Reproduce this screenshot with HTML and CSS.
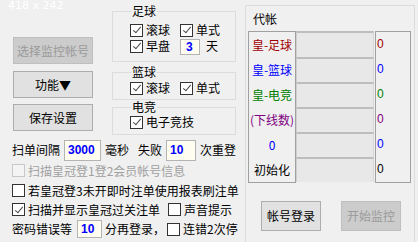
FILE: index.html
```html
<!DOCTYPE html>
<html lang="zh-CN">
<head>
	<meta charset="UTF-8">
	<title>监控设置</title>
	<link rel="stylesheet" href="styles.css">
</head>
<body>

	<!-- size watermark -->
	<div class="mark">418 x 242</div>

	<div class="app">
		<!-- Left Section -->
		<div class="left">
			<div class="top">
				<div class="btns">
					<button class="btn off">选择监控帐号</button>
					<button class="btn">功能▼</button>
					<button class="btn">保存设置</button>
				</div>

				<div class="groups">
					<fieldset class="grp g-foot">
						<legend>足球</legend>
						<div class="row">
							<label class="cb col"><span class="box on"></span>滚球</label>
							<label class="cb"><span class="box on"></span>单式</label>
						</div>
						<div class="row">
							<label class="cb col"><span class="box on"></span>早盘</label>
							<span class="num small">3</span>
							<span class="days">天</span>
						</div>
					</fieldset>

					<fieldset class="grp g-bask">
						<legend>篮球</legend>
						<div class="row">
							<label class="cb col"><span class="box on"></span>滚球</label>
							<label class="cb"><span class="box on"></span>单式</label>
						</div>
					</fieldset>

					<fieldset class="grp g-esp">
						<legend>电竞</legend>
						<div class="row">
							<label class="cb"><span class="box on"></span>电子竞技</label>
						</div>
					</fieldset>
				</div>
			</div>

			<div class="opts">
				<div class="line l1">
					<span>扫单间隔</span>
					<span class="num n-ms">3000</span>
					<span class="sp4">毫秒</span>
					<span class="sp9">失败</span>
					<span class="num n-fail">10</span>
					<span class="sp4">次重登</span>
				</div>
				<div class="line l2">
					<label class="cb dis"><span class="box"></span>扫描皇冠登1登2会员帐号信息</label>
				</div>
				<div class="line l3">
					<label class="cb"><span class="box"></span>若皇冠登3未开即时注单使用报表刷注单</label>
				</div>
				<div class="line l4">
					<label class="cb"><span class="box on"></span>扫描并显示皇冠过关注单</label>
					<label class="cb sp8"><span class="box"></span>声音提示</label>
				</div>
				<div class="line l5">
					<span>密码错误等</span>
					<span class="num n-wait">10</span>
					<span class="sp3">分再登录，</span>
					<label class="cb sp2"><span class="box"></span>连错2次停</label>
				</div>
			</div>
		</div>

		<!-- Right Section -->
		<div class="right">
			<div class="title">代帐</div>
			<div class="table">
				<div class="labels">
					<div class="c-red">皇-足球</div>
					<div class="c-blue">皇-篮球</div>
					<div class="c-green">皇-电竞</div>
					<div class="c-purple">(下线数)</div>
					<div class="c-blue">0</div>
					<div>初始化</div>
				</div>
				<div class="cells">
					<div></div>
					<div></div>
					<div></div>
					<div></div>
					<div></div>
					<div></div>
				</div>
				<div class="vals">
					<div class="c-red">0</div>
					<div class="c-blue">0</div>
					<div class="c-green">0</div>
					<div class="c-purple">0</div>
					<div class="c-blue">0</div>
					<div>0</div>
				</div>
			</div>
			<div class="actions">
				<button class="btn wide">帐号登录</button>
				<button class="btn wide off">开始监控</button>
			</div>
		</div>
	</div>

</body>
</html>
```

FILE: styles.css
```css
/* Global */
body {
	margin: 0;
	overflow: hidden;
	background: #f0f0f0;
	color: #000;
	font-family: "Noto Sans CJK SC", "Noto Sans", sans-serif;
	font-size: 12px;
	line-height: 14px;
}

.mark {
	position: absolute;
	left: 8px;
	top: -1px;
	font-family: "DejaVu Sans", sans-serif;
	font-size: 11px;
	color: #fff;
}

.app {
	display: flex;
	height: 242px;
	overflow: hidden;
}

/* Left Section */
.left {
	width: 245px;
	flex: none;
}

.top {
	display: flex;
	height: 139px;
}

.btns {
	display: flex;
	flex-direction: column;
	padding: 37px 0 0 13px;
	gap: 7px;
}

.btn {
	width: 80px;
	height: 27px;
	padding: 0;
	background: #e1e1e1;
	border: 1px solid #adadad;
	font: inherit;
	color: #000;
}

.btn.off {
	background: #cccccc;
	border-color: #bfbfbf;
	color: #9a9a9a;
}

.btns .btn:last-child {
	margin-top: -1px;
}

/* Group boxes */
.groups {
	margin-left: 19px;
	width: 124px;
}

.grp {
	box-sizing: border-box;
	margin: 0;
	padding: 0 0 0 17px;
	border: 1px solid #dcdcdc;
	min-inline-size: 0;
}

.grp legend {
	padding: 0 1px;
	margin-left: 1px;
	line-height: 14px;
}

.g-foot {
	margin-top: 4px;
	height: 58px;
	padding-top: 4px;
}

.g-bask {
	margin-top: 3px;
	height: 35px;
	padding-top: 1px;
}

.g-esp {
	height: 35px;
}

.row {
	display: flex;
	align-items: center;
	height: 16px;
}

.col {
	width: 50px;
}

/* Checkboxes */
.cb {
	display: flex;
	align-items: center;
	gap: 3px;
	white-space: nowrap;
}

.box {
	box-sizing: border-box;
	width: 13px;
	height: 13px;
	flex: none;
	background: #fff;
	border: 1px solid #333;
	display: flex;
	align-items: center;
	justify-content: center;
}

.box.on::after {
	content: "";
	width: 3px;
	height: 7px;
	margin-top: -2px;
	border: solid #4a4a4a;
	border-width: 0 1.5px 1.5px 0;
	transform: rotate(40deg);
}

.cb.dis {
	color: #a0a0a0;
}

.cb.dis .box {
	border-color: #c8c8c8;
	background: #f4f4f4;
}

/* Number inputs */
.num {
	box-sizing: border-box;
	display: flex;
	align-items: center;
	padding-left: 3px;
	background: #fffcf0;
	border: 1px solid #b4b4b4;
	color: #0000ff;
	font-family: "Liberation Sans", Arial, sans-serif;
	font-weight: 700;
	font-size: 12px;
}

.num.small {
	width: 20px;
	height: 16px;
	margin-top: 2px;
	padding-left: 5px;
}

.days {
	margin-left: 6px;
}

/* Options */
.opts {
	padding-left: 12px;
}

.line {
	display: flex;
	align-items: center;
	white-space: nowrap;
}

.l1 { height: 22px; }
.l2 { height: 19px; }
.l3 { height: 21px; }
.l4 { height: 17px; }
.l5 { height: 22px; }

.n-ms {
	width: 37px;
	height: 21px;
	margin-left: 4px;
}

.n-fail {
	width: 30px;
	height: 21px;
	margin-left: 4px;
}

.n-wait {
	width: 25px;
	height: 18px;
	margin-left: 5px;
}

.sp2 { margin-left: 2px; }
.sp3 { margin-left: 3px; }
.sp4 { margin-left: 4px; }
.sp8 { margin-left: 8px; }
.sp9 { margin-left: 9px; }

/* Right Section */
.right {
	box-sizing: border-box;
	width: 170px;
	margin-top: 5px;
	height: 237px;
	border: 1px solid #dcdcdc;
	border-bottom: 0;
	padding-left: 2px;
}

.title {
	padding: 6px 0 0 5px;
	height: 19px;
	line-height: 14px;
}

.table {
	display: flex;
	height: 152px;
}

.labels {
	width: 46px;
	border: 1px solid #a0a0a0;
}

.labels div {
	height: 25px;
	line-height: 25px;
	text-align: center;
	white-space: nowrap;
}

.cells {
	width: 78px;
}

.cells div {
	box-sizing: border-box;
	height: 25px;
	background: #e8e8e8;
	border-top: 2px solid #bdbdbd;
	border-left: 1px solid #cfcfcf;
	border-right: 1px solid #d8d8d8;
}

.cells div:first-child {
	height: 26px;
}

.vals {
	width: 34px;
	margin-left: 1px;
	border: 1px solid #a0a0a0;
}

.vals div {
	height: 25px;
	line-height: 25px;
	padding-left: 1px;
	font-family: "Liberation Sans", Arial, sans-serif;
}

.c-red { color: #a00000; }
.c-blue { color: #0000ff; }
.c-green { color: #008000; }
.c-purple { color: #800080; }

.actions {
	display: flex;
	gap: 20px;
	padding: 18px 0 0 13px;
}

.btn.wide {
	width: 60px;
	height: 30px;
}
```
